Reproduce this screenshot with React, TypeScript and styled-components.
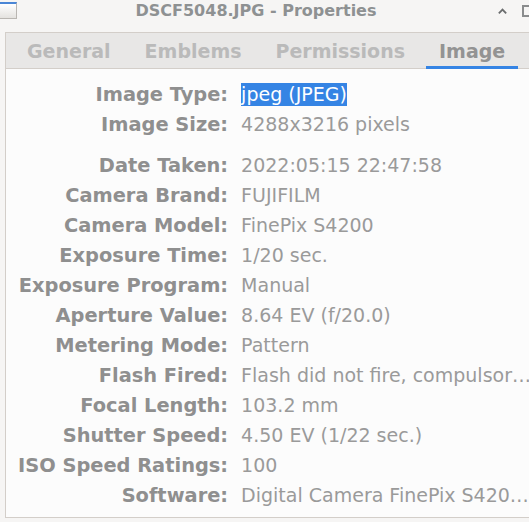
import styled, { createGlobalStyle } from "styled-components";

const GlobalStyle = createGlobalStyle`
  html, body {
    margin: 0;
    padding: 0;
    background: #f6f5f4;
    overflow: hidden;
  }
  body {
    font-family: "DejaVu Sans", "Noto Sans", sans-serif;
  }
`;

interface IRow {
  label: string;
  value: string;
  selected?: boolean;
  spaced?: boolean;
}

const rows: IRow[] = [
  { label: "Image Type:", value: "jpeg (JPEG)", selected: true },
  { label: "Image Size:", value: "4288x3216 pixels" },
  { label: "Date Taken:", value: "2022:05:15 22:47:58", spaced: true },
  { label: "Camera Brand:", value: "FUJIFILM" },
  { label: "Camera Model:", value: "FinePix S4200" },
  { label: "Exposure Time:", value: "1/20 sec." },
  { label: "Exposure Program:", value: "Manual" },
  { label: "Aperture Value:", value: "8.64 EV (f/20.0)" },
  { label: "Metering Mode:", value: "Pattern" },
  { label: "Flash Fired:", value: "Flash did not fire, compulsor…" },
  { label: "Focal Length:", value: "103.2 mm" },
  { label: "Shutter Speed:", value: "4.50 EV (1/22 sec.)" },
  { label: "ISO Speed Ratings:", value: "100" },
  { label: "Software:", value: "Digital Camera FinePix S420…" },
];

const tabs = ["General", "Emblems", "Permissions", "Image"];

const App = () => {
  return (
    <Window>
      <GlobalStyle />
      <HeaderBar>
        <StubButton />
        <Title>DSCF5048.JPG - Properties</Title>
        <Controls>
          <svg width="12" height="8" viewBox="0 0 12 8">
            <path
              d="M2 6.5 L6 2.5 L10 6.5"
              fill="none"
              stroke="#6b6d6e"
              strokeWidth="2"
            />
          </svg>
          <MaxBox />
        </Controls>
      </HeaderBar>
      <Notebook>
        <TabBar>
          {tabs.map((t) => (
            <Tab key={t} $active={t === "Image"}>
              {t}
            </Tab>
          ))}
        </TabBar>
        <Content>
          {rows.map((r) => (
            <Row key={r.label} $spaced={r.spaced}>
              <Label>{r.label}</Label>
              <Value>
                <ValueText $selected={r.selected}>{r.value}</ValueText>
              </Value>
            </Row>
          ))}
        </Content>
      </Notebook>
    </Window>
  );
};

const Window = styled.div`
  width: 529px;
  height: 522px;
  background: #f6f5f4;
  overflow: hidden;
`;

const HeaderBar = styled.div`
  height: 32px;
  display: flex;
  align-items: flex-start;
`;

const StubButton = styled.div`
  width: 16px;
  height: 14px;
  margin-top: 2px;
  border-top: 2px solid #4a86d6;
  border-right: 1px solid #b9b6b2;
  border-bottom: 1px solid #b9b6b2;
  background: linear-gradient(#ffffff, #e4e2df);
  flex-shrink: 0;
`;

const Title = styled.div`
  flex: 1;
  text-align: center;
  font-size: 16px;
  font-weight: bold;
  line-height: 21px;
  color: #8e9192;
`;

const Controls = styled.div`
  display: flex;
  align-items: center;
  gap: 14px;
  height: 22px;
  width: 38px;
  flex-shrink: 0;
  margin-left: 2px;
  margin-right: -6px;
`;

const MaxBox = styled.div`
  width: 9px;
  height: 8px;
  border: 2px solid #8a8c8d;
  flex-shrink: 0;
`;

const Notebook = styled.div`
  margin-left: 5px;
  width: 560px;
  border: 1px solid #d3cec9;
  background: #fcfcfc;
`;

const TabBar = styled.div`
  display: flex;
  gap: 8px;
  padding-left: 8px;
  height: 35px;
  background: #e8e7e6;
  border-bottom: 1px solid #d3cec9;
`;

const Tab = styled.div<{ $active?: boolean }>`
  padding: 0 13px;
  display: flex;
  align-items: center;
  font-size: 19px;
  font-weight: bold;
  color: ${({ $active }) => ($active ? "#939393" : "#bababa")};
  box-shadow: ${({ $active }) =>
    $active ? "inset 0 -3px 0 #3584e4" : "none"};
  margin-bottom: -1px;
`;

const Content = styled.div`
  display: grid;
  grid-template-columns: auto 1fr;
  column-gap: 13px;
  row-gap: 7px;
  padding: 14px 0 10px 12px;
`;

const Row = styled.div<{ $spaced?: boolean }>`
  display: contents;

  & > * {
    margin-top: ${({ $spaced }) => ($spaced ? "11px" : "0")};
  }
`;

const Label = styled.div`
  text-align: right;
  font-size: 19.4px;
  font-weight: bold;
  line-height: 23px;
  color: #8f8f8f;
  white-space: nowrap;
`;

const Value = styled.div`
  font-size: 19px;
  line-height: 23px;
  color: #9a9a9a;
  white-space: nowrap;
`;

const ValueText = styled.span<{ $selected?: boolean }>`
  display: inline-block;
  background: ${({ $selected }) => ($selected ? "#3584e4" : "transparent")};
  color: ${({ $selected }) => ($selected ? "#ffffff" : "inherit")};
`;

export default App;
